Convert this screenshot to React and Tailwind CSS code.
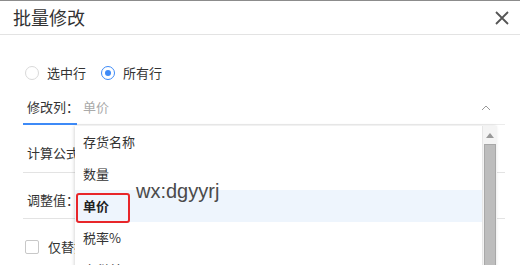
import React from "react";

const cjk = { fontFamily: '"Noto Sans CJK SC", "Noto Sans", sans-serif' };

export default function App() {
  const items = ["存货名称", "数量", "单价", "税率%", "含税单价"];
  return (
    <div className="relative w-[520px] h-[265px] overflow-hidden bg-white border-t border-[#8c8c8c]" style={cjk}>
      <div className="h-[34px] flex items-center justify-between pl-[13px] pr-[11px] border-b border-[#e3e3e3]">
        <span className="text-[18px] text-[#333]">批量修改</span>
        <svg width="14" height="14" viewBox="0 0 14 14" className="mt-[1px]">
          <path d="M1 1 L13 13 M13 1 L1 13" stroke="#555" strokeWidth="1.8" />
        </svg>
      </div>
      <div className="pl-[23px] pr-[15px]">
        <div className="flex items-center h-[20px] mt-[28px] text-[13px] text-[#333]">
          <span className="w-[14px] h-[14px] rounded-full border border-[#d9d9d9] ml-[2px]" />
          <span className="ml-[8px]">选中行</span>
          <span className="w-[14px] h-[14px] rounded-full border border-[#3d8af7] ml-[15px] flex items-center justify-center">
            <span className="w-[6px] h-[6px] rounded-full bg-[#3d8af7]" />
          </span>
          <span className="ml-[8px]">所有行</span>
        </div>
        <div className="relative flex items-center h-[35px] mt-[7px] text-[13px] border-b border-[#ececec]">
          <span className="ml-[4px] text-[#333]">修改列：</span>
          <span className="ml-[4px] text-[#aaa]">单价</span>
          <svg width="10" height="6" viewBox="0 0 10 6" className="absolute right-[14px] top-[15px]">
            <path d="M1 5 L5 1 L9 5" stroke="#999" strokeWidth="1" fill="none" />
          </svg>
          <span className="absolute left-0 bottom-[-1px] w-[54px] h-[2px] bg-[#3d8af7]" />
        </div>
        <div className="flex items-center h-[48px] pt-[8px] text-[13px] text-[#333] border-b border-[#e3e3e3]">
          <span className="ml-[4px]">计算公式</span>
        </div>
        <div className="flex items-center h-[46px] pt-[8px] text-[13px] text-[#333] border-b border-[#e3e3e3]">
          <span className="ml-[4px]">调整值：</span>
        </div>
        <div className="flex items-center h-[20px] mt-[18px] text-[13px] text-[#333]">
          <span className="w-[14px] h-[14px] rounded-[2px] border border-[#c8c8c8] ml-[2px]" />
          <span className="ml-[9px]">仅替换</span>
        </div>
      </div>

      <div className="absolute left-[75px] top-[125px] w-[422px] h-[160px] bg-white shadow-[-1px_0_3px_rgba(0,0,0,0.15)] flex">
        <div className="flex-1">
          {items.map((t) => (
            <div
              key={t}
              className={
                "h-[32px] flex items-center pl-[8px] text-[13px] " +
                (t === "单价" ? "bg-[#eef5fd] text-[#222] font-bold" : "text-[#333]")
              }
            >
              {t}
            </div>
          ))}
        </div>
        <div className="w-[15px] flex flex-col bg-[#f4f4f4] border-l border-[#e6e6e6]">
          <div className="h-[18px] flex items-center justify-center">
            <svg width="8" height="5" viewBox="0 0 8 5">
              <path d="M0 5 L4 0 L8 5 Z" fill="#999" />
            </svg>
          </div>
          <div className="flex-1 mx-[1px] bg-[#bdbdbd] border border-[#a8a8a8]" />
        </div>
      </div>

      <div className="absolute left-[76px] top-[192px] w-[54px] h-[30px] border-2 border-[#e8262a] rounded-[3px]" />
      <div
        className="absolute left-[136px] top-[178px] text-[20px] leading-[24px] text-[#4a4a4a]"
        style={{ fontFamily: '"Liberation Sans", Arial, sans-serif' }}
      >
        wx:dgyyrj
      </div>
    </div>
  );
}
